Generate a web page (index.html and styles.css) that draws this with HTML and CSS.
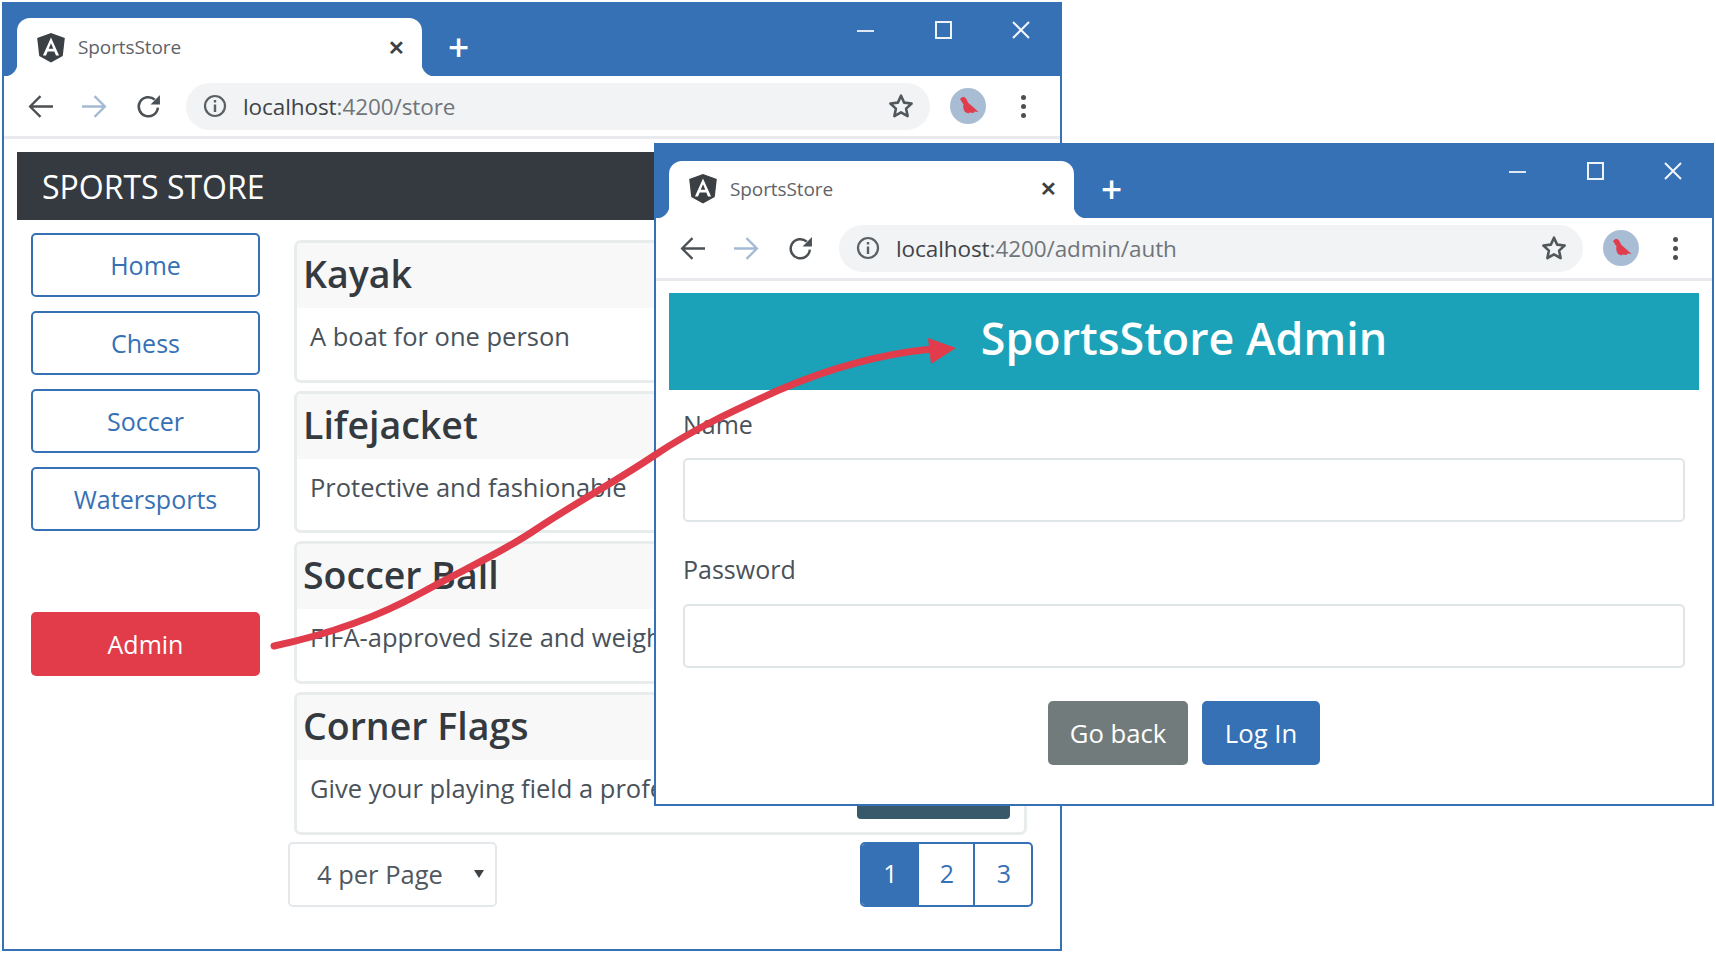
FILE: index.html
```html
<!DOCTYPE html>
<html lang="en">
<head>
    <meta charset="UTF-8">
    <title>SportsStore</title>
    <link rel="stylesheet" href="styles.css">
</head>
<body>

<svg class="icon-defs" width="0" height="0">
    <symbol id="i-angular" viewBox="0 0 250 250">
        <path fill="#3b4045" d="M125 12 17 50l16 142 92 50 92-50 16-142z"/>
        <path fill="#fff" d="M125 46 62 188h24l13-32h52l13 32h24zm18 89h-36l18-44z"/>
    </symbol>
    <symbol id="i-back" viewBox="0 0 24 24">
        <path fill="none" stroke="currentColor" stroke-width="2.2" d="M24 12H3M12 2 2 12l10 10"/>
    </symbol>
    <symbol id="i-forward" viewBox="0 0 24 24">
        <path fill="none" stroke="currentColor" stroke-width="2.2" d="M0 12h21M12 2l10 10-10 10"/>
    </symbol>
    <symbol id="i-reload" viewBox="0 0 24 24">
        <path fill="none" stroke="currentColor" stroke-width="2.4" d="M21 13a9.2 9.2 0 1 1-3-7.6"/>
        <path fill="currentColor" d="M23 1v9h-9z"/>
    </symbol>
    <symbol id="i-info" viewBox="0 0 24 24">
        <circle cx="12" cy="12" r="10" fill="none" stroke="currentColor" stroke-width="2.2"/>
        <path fill="currentColor" d="M10.8 6h2.400v2.400h-2.400zM10.800 10.400h2.400V18h-2.400z"/>
    </symbol>
    <symbol id="i-star" viewBox="0 0 24 24">
        <path fill="none" stroke="currentColor" stroke-width="2.4" stroke-linejoin="round" d="m12 2.500 2.900 6.400 6.900.8-5.100 4.700 1.400 6.900-6.100-3.500-6.100 3.500 1.400-6.900-5.100-4.700 6.900-.8z"/>
    </symbol>
    <symbol id="i-bird" viewBox="0 0 36 36">
        <circle cx="18" cy="18" r="18" fill="#a8bdd4"/>
        <path fill="#e03c4c" d="M10 12c0-2 2-3.500 4-3 2 .5 3 3 4 5.500 3 3 7 6 10.500 9.500l-4-.5-1 1.500-4-.5-1 1-3.500-1.500c-2-3-2-6-1.500-8-1-1-2.500-2.500-2.500-4z"/>
    </symbol>
</svg>

<div class="canvas">

    <!-- store window, behind -->
    <section class="browser browser-store">
        <div class="titlebar">
            <div class="tab">
                <svg class="tab-logo"><use href="#i-angular"/></svg>
                <span class="tab-title">SportsStore</span>
                <span class="tab-close">&#10005;</span>
            </div>
            <span class="tab-new">+</span>
            <div class="win-controls">
                <span class="win-min"></span>
                <span class="win-max"></span>
                <svg class="win-close" viewBox="0 0 18 18"><path d="M1 1l16 16M17 1 1 17"/></svg>
            </div>
        </div>
        <div class="toolbar">
            <svg class="nav-icon"><use href="#i-back"/></svg>
            <svg class="nav-icon nav-off"><use href="#i-forward"/></svg>
            <svg class="nav-icon"><use href="#i-reload"/></svg>
            <div class="omnibox">
                <svg class="omni-info"><use href="#i-info"/></svg>
                <span class="omni-url">localhost<span class="omni-path">:4200/store</span></span>
                <svg class="omni-star"><use href="#i-star"/></svg>
            </div>
            <svg class="avatar"><use href="#i-bird"/></svg>
            <span class="dots"><i></i><i></i><i></i></span>
        </div>
        <div class="page">
            <div class="navbar">SPORTS STORE</div>
            <div class="store-main">
                <div class="sidebar">
                    <button class="cat-btn">Home</button>
                    <button class="cat-btn">Chess</button>
                    <button class="cat-btn">Soccer</button>
                    <button class="cat-btn">Watersports</button>
                    <button class="admin-btn">Admin</button>
                </div>
                <div class="products">
                    <div class="card">
                        <h4 class="card-head">Kayak</h4>
                        <div class="card-body">A boat for one person</div>
                    </div>
                    <div class="card">
                        <h4 class="card-head">Lifejacket</h4>
                        <div class="card-body">Protective and fashionable</div>
                    </div>
                    <div class="card">
                        <h4 class="card-head">Soccer Ball</h4>
                        <div class="card-body">FIFA-approved size and weight</div>
                    </div>
                    <div class="card">
                        <h4 class="card-head">Corner Flags</h4>
                        <div class="card-body">Give your playing field a professional touch<span class="cart-btn"></span></div>
                    </div>
                    <div class="pager-row">
                        <div class="per-page">4 per Page</div>
                        <div class="pager">
                            <span class="page-link active">1</span>
                            <span class="page-link">2</span>
                            <span class="page-link">3</span>
                        </div>
                    </div>
                </div>
            </div>
        </div>
    </section>

    <!-- admin window, in front -->
    <section class="browser browser-admin">
        <div class="titlebar">
            <div class="tab">
                <svg class="tab-logo"><use href="#i-angular"/></svg>
                <span class="tab-title">SportsStore</span>
                <span class="tab-close">&#10005;</span>
            </div>
            <span class="tab-new">+</span>
            <div class="win-controls">
                <span class="win-min"></span>
                <span class="win-max"></span>
                <svg class="win-close" viewBox="0 0 18 18"><path d="M1 1l16 16M17 1 1 17"/></svg>
            </div>
        </div>
        <div class="toolbar">
            <svg class="nav-icon"><use href="#i-back"/></svg>
            <svg class="nav-icon nav-off"><use href="#i-forward"/></svg>
            <svg class="nav-icon"><use href="#i-reload"/></svg>
            <div class="omnibox">
                <svg class="omni-info"><use href="#i-info"/></svg>
                <span class="omni-url">localhost<span class="omni-path">:4200/admin/auth</span></span>
                <svg class="omni-star"><use href="#i-star"/></svg>
            </div>
            <svg class="avatar"><use href="#i-bird"/></svg>
            <span class="dots"><i></i><i></i><i></i></span>
        </div>
        <div class="page admin-page">
            <div class="admin-head">SportsStore Admin</div>
            <form class="login-form">
                <label class="field-label" for="name">Name</label>
                <input class="field-input" id="name" type="text">
                <label class="field-label field-second" for="password">Password</label>
                <input class="field-input" id="password" type="password">
                <div class="form-actions">
                    <button type="button" class="btn-back">Go back</button>
                    <button type="button" class="btn-login">Log In</button>
                </div>
            </form>
        </div>
    </section>

    <svg class="arrow" width="1716" height="953" viewBox="0 0 1716 953">
        <path d="M274 646C330 634 378 617 421 593C460 571 498 555 535 530C575 503 615 482 655 455C695 428 737 409 779 390C830 368 880 354 932 349" fill="none" stroke="#e03c4c" stroke-width="7" stroke-linecap="round"/>
        <path d="M956 348 928 338 931 364z" fill="#e03c4c"/>
    </svg>
</div>

</body>
</html>
```

FILE: styles.css
```css
* {
    box-sizing: border-box;
}

body {
    margin: 0;
    background-color: #fff;
    font-family: "Open Sans", "Noto Sans", sans-serif;
    overflow: hidden;
}

.icon-defs {
    position: absolute;
}

.canvas {
    position: relative;
    width: 1716px;
    height: 953px;
}

/* browser chrome */
.browser {
    position: absolute;
    display: flex;
    flex-direction: column;
    background-color: #fff;
    border: 2px solid #3671b5;
    overflow: hidden;
}

.browser-store {
    left: 2px;
    top: 2px;
    width: 1060px;
    height: 949px;
}

.browser-admin {
    left: 654px;
    top: 143px;
    width: 1060px;
    height: 663px;
}

.titlebar {
    position: relative;
    display: flex;
    align-items: flex-end;
    height: 72px;
    padding-left: 13px;
    background-color: #3671b5;
    flex-shrink: 0;
}

.browser-admin .titlebar {
    height: 73px;
}

.browser-admin .tab {
    height: 57px;
    padding-bottom: 2px;
}

.browser-admin .tab-new {
    margin-left: 27px;
}

.tab {
    position: relative;
    display: flex;
    align-items: center;
    width: 405px;
    height: 58px;
    padding: 0 17px 0 18px;
    background-color: #fff;
    border-radius: 13px 13px 0 0;
}

.tab::before,
.tab::after {
    content: "";
    position: absolute;
    bottom: 0;
    width: 13px;
    height: 13px;
}

.tab::before {
    left: -13px;
    background: radial-gradient(circle at 0 0, #3671b5 13px, #fff 14px);
}

.tab::after {
    right: -13px;
    background: radial-gradient(circle at 100% 0, #3671b5 13px, #fff 14px);
}

.tab-logo {
    width: 32px;
    height: 33px;
}

.tab-title {
    margin-left: 11px;
    font-size: 19px;
    letter-spacing: -0.1px;
    color: #5f6368;
}

.tab-close {
    margin-left: auto;
    font-size: 20px;
    font-weight: 700;
    color: #3c4043;
}

.tab-new {
    align-self: flex-end;
    margin: 0 0 9px 26px;
    font-size: 37px;
    font-weight: 600;
    line-height: 40px;
    color: #fff;
}

.win-controls {
    display: flex;
    align-items: center;
    gap: 60.5px;
    align-self: flex-start;
    height: 18px;
    margin: 17px 30px 0 auto;
}

.win-min {
    width: 17px;
    height: 2px;
    margin-top: 1px;
    background-color: #dfe8f2;
}

.win-max {
    width: 17px;
    height: 18px;
    border: 2px solid #eef3f8;
}

.win-close {
    width: 18px;
    height: 18px;
}

.win-close path {
    fill: none;
    stroke: #f3f6fa;
    stroke-width: 2;
}

.toolbar {
    display: flex;
    align-items: center;
    height: 63px;
    padding: 0 26px 0 24px;
    border-bottom: 3px solid #e8eaed;
    flex-shrink: 0;
}

.nav-icon {
    width: 25px;
    height: 25px;
    margin-right: 29px;
    color: #4b5054;
}

.nav-off {
    color: #a4bad3;
}

.omnibox {
    display: flex;
    align-items: center;
    width: 744px;
    height: 47px;
    margin-left: -4px;
    padding: 0 16px 0 17px;
    background-color: #f1f3f4;
    border-radius: 24px;
}

.browser-admin .omnibox {
    margin-left: -3px;
}

.omni-info {
    width: 24px;
    height: 24px;
    color: #5a6064;
}

.omni-url {
    margin-left: 16px;
    font-size: 22.5px;
    letter-spacing: -0.08px;
    color: #3f4448;
}

.omni-path {
    color: #70757a;
}

.omni-star {
    width: 26px;
    height: 26px;
    margin-left: auto;
    color: #51585c;
}

.avatar {
    width: 36px;
    height: 36px;
    margin-left: 20px;
}

.dots {
    display: flex;
    flex-direction: column;
    gap: 4px;
    margin-left: auto;
    margin-right: 8px;
}

.dots i {
    display: block;
    width: 5px;
    height: 5px;
    border-radius: 50%;
    background-color: #4b5054;
}

/* store page */
.navbar {
    display: flex;
    align-items: center;
    height: 68px;
    margin: 13px 13px 0;
    padding-left: 25px;
    background-color: #343a40;
    color: #fff;
    font-size: 32px;
}

.store-main {
    display: flex;
}

.sidebar {
    display: flex;
    flex-direction: column;
    gap: 14px;
    width: 229px;
    margin: 13px 0 0 27px;
}

.cat-btn,
.admin-btn {
    height: 64px;
    font-family: inherit;
    font-size: 25px;
    border-radius: 5px;
}

.cat-btn {
    background-color: #fff;
    border: 2px solid #3671b5;
    color: #3671b5;
}

.admin-btn {
    margin-top: 67px;
    background-color: #e23c4b;
    border: none;
    color: #fff;
}

.products {
    display: flex;
    flex-direction: column;
    gap: 8px;
    width: 745px;
    margin: 20px 0 0 28px;
}

.card {
    height: 142.7px;
    margin: 0 6px;
    border: 3px solid #e9ecec;
    border-radius: 7px;
    overflow: hidden;
}

.card-head {
    display: flex;
    align-items: center;
    height: 65px;
    margin: 0;
    padding: 0 0 4px 6px;
    background-color: #f8f8f8;
    font-size: 37.5px;
    font-weight: 600;
    color: #343a40;
}

.card-body {
    position: relative;
    height: 72px;
    padding: 11px 0 0 13px;
    font-size: 25.5px;
    color: #49525a;
}

.cart-btn {
    position: absolute;
    right: 14px;
    bottom: 13px;
    width: 153px;
    height: 40px;
    background-color: #38596a;
    border-radius: 4px;
}

.pager-row {
    display: flex;
    justify-content: space-between;
    margin-top: -1px;
}

.per-page {
    position: relative;
    display: flex;
    align-items: center;
    width: 209px;
    height: 65px;
    padding-left: 27px;
    border: 2px solid #e4e8ea;
    border-radius: 5px;
    font-size: 25.5px;
    color: #4f585f;
}

.per-page::after {
    content: "";
    position: absolute;
    right: 11px;
    top: 26px;
    border-left: 5px solid transparent;
    border-right: 5px solid transparent;
    border-top: 8px solid #3c4348;
}

.pager {
    display: flex;
    height: 65px;
    border: 2px solid #3671b5;
    border-radius: 5px;
    overflow: hidden;
}

.page-link {
    display: flex;
    align-items: center;
    justify-content: center;
    width: 56px;
    padding: 0 0 2px 2px;
    font-size: 25px;
    color: #3671b5;
    border-left: 2px solid #3671b5;
}

.page-link.active {
    width: 55px;
    border-left: none;
    background-color: #3671b5;
    color: #fff;
}

.page-link:last-child {
    width: 58px;
}

/* admin page */
.admin-page {
    padding: 12px 13px 0;
}

.admin-head {
    height: 97px;
    background-color: #1ba2b8;
    color: #fff;
    font-size: 44.8px;
    font-weight: 600;
    line-height: 90px;
    text-align: center;
}

.login-form {
    display: flex;
    flex-direction: column;
    padding: 0 14px;
}

.field-label {
    margin-top: 15px;
    height: 53px;
    font-size: 25px;
    line-height: 38px;
    color: #49525a;
}

.field-second {
    margin-top: 28px;
    height: 54px;
}

.field-input {
    height: 64px;
    background-color: #fff;
    border: 2px solid #e0e5e8;
    border-radius: 5px;
}

.form-actions {
    display: flex;
    justify-content: center;
    gap: 14px;
    margin-top: 33px;
}

.form-actions button {
    height: 64px;
    border: none;
    border-radius: 5px;
    font-family: inherit;
    font-size: 25.7px;
    color: #fff;
}

.btn-back {
    width: 140px;
    background-color: #727b7c;
}

.btn-login {
    width: 118px;
    background-color: #3671b5;
}

/* arrow across both windows */
.arrow {
    position: absolute;
    left: 0;
    top: 0;
    pointer-events: none;
}
```
